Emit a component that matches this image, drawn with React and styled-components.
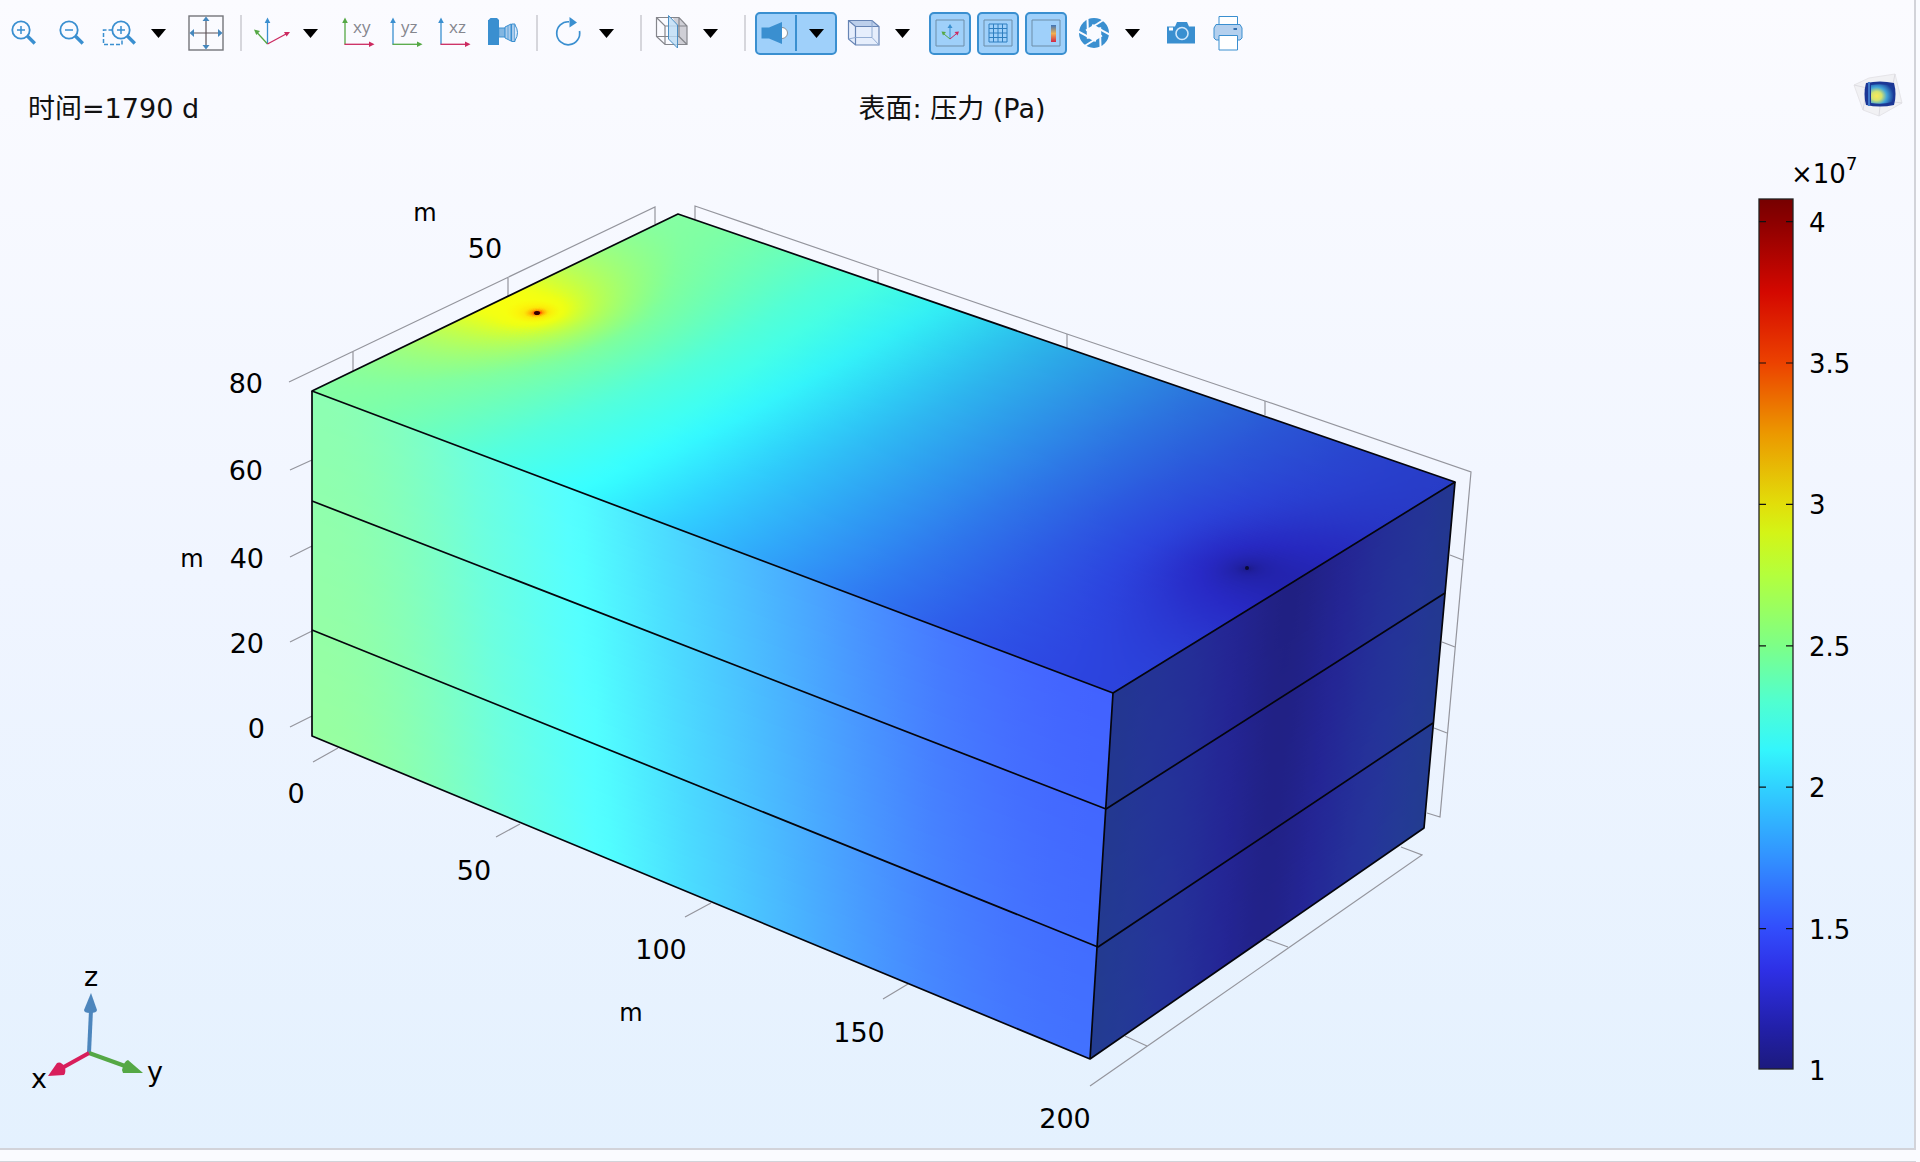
import React from 'react';
import styled, { createGlobalStyle } from 'styled-components';

const BLUE = '#3a8fd0';
const GREEN = '#55a845';
const RED = '#cc2a60';
const GREY = '#85868e';

const GlobalStyle = createGlobalStyle`
  body {
    margin: 0;
    background: #fafbff;
    font-family: 'DejaVu Sans', 'Noto Sans CJK SC', sans-serif;
    color: #111;
  }
`;

const Frame = styled.div`
  display: flex;
  flex-direction: column;
  box-sizing: border-box;
  min-height: 100vh;
  padding-right: 4px;
`;

const Panel = styled.main`
  position: relative;
  display: flex;
  flex: 1;
  flex-direction: column;
  border-right: 2px solid #d2d3d9;
  border-bottom: 2px solid #d2d3d9;
  background: linear-gradient(#fbfbff, #f0f5ff 50%, #e4f1fe);
`;

const StatusStrip = styled.footer`
  height: 11px;
  border-bottom: 1px solid #d2d3d9;
`;

const Toolbar = styled.div`
  display: flex;
  align-items: center;
  height: 66px;
`;

const ToolButton = styled.button`
  display: flex;
  align-items: center;
  justify-content: center;
  width: 42px;
  height: 43px;
  margin: 0 3px;
  padding: 0;
  border: ${props => (props.$active ? `2px solid ${BLUE}` : '0')};
  border-radius: 5px;
  background: ${props => (props.$active ? '#9fd0fa' : 'transparent')};
`;

const CaretButton = styled.button`
  display: flex;
  align-items: center;
  justify-content: center;
  width: 28px;
  height: 43px;
  margin-right: 10px;
  padding: 0;
  border: 0;
  background: transparent;
`;

const SplitButton = styled.div`
  display: flex;
  align-items: center;
  box-sizing: border-box;
  width: 82px;
  height: 43px;
  margin: 0 3px;
  border: 2px solid ${BLUE};
  border-radius: 5px;
  background: #9fd0fa;
`;

const SplitPart = styled.button`
  display: flex;
  flex: 1;
  align-items: center;
  justify-content: center;
  height: 36px;
  padding: 0;
  border: 0;
  background: transparent;

  & + & {
    border-left: 2px solid ${BLUE};
  }
`;

const Divider = styled.span`
  width: 2px;
  height: 36px;
  margin: 0 6px 0 10px;
  background: #d6d6dc;
`;

const IconSvg = styled.svg`
  flex: none;
  width: 36px;
  height: 36px;
  overflow: visible;
  fill: none;
`;

const CaretSvg = styled.svg`
  width: 15px;
  height: 9px;
`;

const PlotHeader = styled.header`
  display: grid;
  grid-template-columns: 1fr auto 1fr;
  align-items: center;
  box-sizing: border-box;
  height: 74px;
  padding: 24px 38px 12px 28px;
  font-size: 27px;
  line-height: 32px;
`;

const HeaderText = styled.span`
  white-space: nowrap;
`;

const Logo = styled.svg`
  position: absolute;
  top: 72px;
  right: 10px;
  width: 52px;
  height: 46px;
`;

const PlotBody = styled.div`
  display: flex;
  flex: 1;
  align-items: flex-start;
`;

const Scene = styled.svg`
  flex: 1690;
  min-width: 0;
  font-size: 27px;
`;

const Legend = styled.svg`
  flex: 224;
  min-width: 0;
  font-size: 26px;
`;

/* ---------- colour table and pressure field ---------- */

const RAINBOW = [
  [1.0, 28, 26, 125],
  [1.15, 34, 32, 170],
  [1.35, 46, 48, 230],
  [1.5, 50, 78, 252],
  [1.75, 50, 146, 255],
  [2.0, 48, 210, 255],
  [2.13, 52, 246, 252],
  [2.3, 80, 255, 208],
  [2.5, 125, 255, 135],
  [2.75, 180, 255, 60],
  [2.9, 212, 244, 22],
  [3.0, 226, 222, 10],
  [3.25, 236, 152, 0],
  [3.5, 236, 66, 0],
  [3.75, 212, 8, 0],
  [4.0, 140, 0, 0],
  [4.08, 118, 0, 0],
];

const lookup = (table, x) => {
  if (x <= table[0][0]) return table[0].slice(1);
  for (let i = 1; i < table.length; i++) {
    if (x <= table[i][0]) {
      const a = table[i - 1];
      const b = table[i];
      const t = (x - a[0]) / (b[0] - a[0]);
      return a.slice(1).map((c, k) => c + (b[k + 1] - c) * t);
    }
  }
  return table[table.length - 1].slice(1);
};

// gain darkens or brightens, lift mixes in white
const shadeColor = (p, gain = 1, lift = 0) =>
  `rgb(${lookup(RAINBOW, p)
    .map(c => Math.max(0, Math.min(255, Math.round(c * gain + (255 - c) * lift))))
    .join(',')})`;

// a well in a closed strip, 200 m x 100 m
const wellTerm = (x, y, x0) => {
  const k = Math.PI / 100;
  const one = xi =>
    Math.log(Math.cosh(k * (x - xi)) - Math.cos(k * (y - 50)) + 1e-5) +
    Math.log(Math.cosh(k * (x - xi)) - Math.cos(k * (y + 50)) + 1e-5);
  return one(x0) + one(-x0) + one(400 - x0);
};

const potential = (u, v) =>
  wellTerm(u * 200, v * 100, 190) - wellTerm(u * 200, v * 100, 10);

const CORNER = potential(0, 0);

const PRESSURE = [
  [-2.8, 1.0],
  [-1.9, 1.16],
  [-1.5, 1.28],
  [-1.2, 1.39],
  [-1, 1.49],
  [-0.75, 1.58],
  [-0.5, 1.69],
  [0, 1.94],
  [0.5, 2.2],
  [1, 2.47],
  [1.25, 2.72],
  [1.45, 2.94],
  [1.65, 3.04],
  [1.82, 3.3],
  [2.0, 3.7],
  [2.2, 4.08],
];

const pressure = (u, v) => lookup(PRESSURE, potential(u, v) / CORNER)[0];

/* ---------- projection ---------- */

// maps the unit square onto a quad given as (0,0) (1,0) (1,1) (0,1)
const project = ([[x0, y0], [x1, y1], [x2, y2], [x3, y3]]) => {
  const dx1 = x1 - x2;
  const dx2 = x3 - x2;
  const dx3 = x0 - x1 + x2 - x3;
  const dy1 = y1 - y2;
  const dy2 = y3 - y2;
  const dy3 = y0 - y1 + y2 - y3;
  const det = dx1 * dy2 - dx2 * dy1;
  const g = (dx3 * dy2 - dx2 * dy3) / det;
  const h = (dx1 * dy3 - dx3 * dy1) / det;
  return (s, t) => {
    const w = g * s + h * t + 1;
    return [
      ((x1 - x0 + g * x1) * s + (x3 - x0 + h * x3) * t + x0) / w,
      ((y1 - y0 + g * y1) * s + (y3 - y0 + h * y3) * t + y0) / w,
    ];
  };
};

const range = (from, to, n) =>
  Array.from({ length: n + 1 }, (_, i) => from + ((to - from) * i) / n);

const grid = list => [...new Set(list.map(n => Number(n.toFixed(5))))].sort((a, b) => a - b);

const WELL_GRID = grid([
  ...range(0, 1, 60),
  ...range(0.02, 0.08, 40),
  ...range(0.92, 0.98, 40),
]);
const TOP_ROWS = grid([...range(0, 1, 140), ...range(0.45, 0.55, 40)]);

const FACES = [
  {
    id: 'top',
    quad: [[312, 391], [1113, 693], [1455, 482], [678, 214]],
    rows: TOP_ROWS,
    stops: WELL_GRID,
    value: (s, t) => pressure(s, t),
    gain: (s, t) => 1.12 - 0.24 * s - 0.09 * t * Math.min(1, s * 2),
    lift: () => 0,
  },
  {
    id: 'front',
    quad: [[312, 391], [1113, 693], [1090, 1059], [312, 736]],
    rows: range(0, 1, 60),
    stops: range(0, 1, 50),
    value: (s, t) => pressure(s, 0) - 0.03 + 0.06 * s + 0.06 * t,
    gain: () => 1.03,
    lift: s => 0.18 - 0.11 * s,
  },
  {
    id: 'side',
    quad: [[1113, 693], [1455, 482], [1424, 828], [1090, 1059]],
    rows: range(0, 1, 60),
    stops: range(0, 1, 50),
    value: (s, t) => pressure(1, s) + 0.04 + 0.04 * t - 0.08 * Math.sin(Math.PI * s),
    gain: s => 0.57 + 0.08 * Math.sin(Math.PI * s),
    lift: () => 0.03,
  },
];

const Face = ({ id, quad, rows, stops, value, gain, lift }) => {
  const at = project(quad);
  return rows.slice(1).map((t1, i) => {
    const t0 = rows[i];
    const t = (t0 + t1) / 2;
    const a = at(0, t);
    const b = at(1, t);
    const length = b[0] - a[0];
    const points = [at(0, t0), at(1, t0), at(1, t1), at(0, t1)];
    return (
      <g key={t0}>
        <linearGradient
          id={`${id}-${i}`}
          gradientUnits="userSpaceOnUse"
          x1={a[0]}
          y1={a[1]}
          x2={b[0]}
          y2={b[1]}
        >
          {stops.map(s => (
            <stop
              key={s}
              offset={(at(s, t)[0] - a[0]) / length}
              stopColor={shadeColor(value(s, t), gain(s, t), lift(s))}
            />
          ))}
        </linearGradient>
        <polygon
          points={points.map(p => p.join(',')).join(' ')}
          fill={`url(#${id}-${i})`}
          shapeRendering="crispEdges"
        />
      </g>
    );
  });
};

/* ---------- scene ---------- */

const AXIS_LINES = [
  'M289 382L655 207V224M353 351V371M508 278V297',
  'M695 219V206L878 269L1067 334L1265 401L1471 472L1440 817L1427 813',
  'M878 269V283M1067 334V348M1265 401V415',
  'M1450 555L1463 560M1442 642L1455 647M1434 728L1447 733',
  'M1401 847L1422 855L1090 1086M1266 939L1288 947M1125 1036L1147 1046',
  'M290 470L312 460M290 557L312 546M290 642L312 631M290 727L312 716',
  'M313 762L338 748M496 837L520 824M685 917L711 903M883 999L908 984',
];

const EDGES = [
  'M312 391L678 214L1455 482L1113 693Z',
  'M312 391V736L1090 1059L1424 828L1455 482M1113 693L1090 1059',
  'M312 501L1106 809L1445 593',
  'M312 630L1098 947L1433 723',
];

const TICK_LABELS = [
  ['80', 263, 393, 'end'],
  ['60', 263, 480, 'end'],
  ['40', 264, 568, 'end'],
  ['20', 264, 653, 'end'],
  ['0', 265, 738, 'end'],
  ['0', 296, 803, 'middle'],
  ['50', 474, 880, 'middle'],
  ['100', 661, 959, 'middle'],
  ['150', 859, 1042, 'middle'],
  ['200', 1065, 1128, 'middle'],
  ['50', 485, 258, 'middle'],
];

const UNIT_LABELS = [
  [425, 221],
  [192, 567],
  [631, 1021],
];

const ModelScene = () => (
  <Scene viewBox="0 140 1690 1008" role="img" aria-label="表面: 压力 (Pa)">
    <g fill="none" stroke="#94959d" strokeWidth="1.2">
      {AXIS_LINES.map(d => (
        <path key={d} d={d} />
      ))}
    </g>
    {FACES.map(face => (
      <Face key={face.id} {...face} />
    ))}
    <ellipse cx="537" cy="313" rx="3" ry="2" fill="#300" />
    <circle cx="1247" cy="568" r="2" fill="#0a0a30" />
    <g fill="none" stroke="#05050c" strokeWidth="1.7" strokeLinejoin="round">
      {EDGES.map(d => (
        <path key={d} d={d} />
      ))}
    </g>
    {TICK_LABELS.map(([text, x, y, anchor]) => (
      <text key={`${x}-${y}`} x={x} y={y} textAnchor={anchor}>
        {text}
      </text>
    ))}
    {UNIT_LABELS.map(([x, y]) => (
      <text key={x} x={x} y={y} textAnchor="middle" fontSize="24">
        m
      </text>
    ))}
    <g strokeWidth="4">
      <path d="M89 1053L91 1010" stroke="#4d86bd" />
      <path d="M91 993L97 1010Q97 1013 90 1013Q84 1013 84 1010Z" fill="#4d86bd" />
      <path d="M89 1053L125 1066" stroke={GREEN} />
      <path d="M143 1073L128 1060Q124 1061 122 1070L123 1073Z" fill={GREEN} />
      <path d="M89 1053L62 1068" stroke="#d81e5b" />
      <path d="M48 1076L57 1063Q61 1061 65 1067Q66 1073 64 1075Z" fill="#d81e5b" />
    </g>
    <text x="91" y="986" textAnchor="middle">z</text>
    <text x="39" y="1088" textAnchor="middle">x</text>
    <text x="155" y="1081" textAnchor="middle">y</text>
  </Scene>
);

const BAR_TOP = 199;
const BAR_BOTTOM = 1069;
const barY = p => 1070 - ((p - 1) / 0.5) * 141.4;

const ColorLegend = () => (
  <Legend viewBox="1690 140 224 1008" role="img" aria-label="×10⁷ Pa">
    <linearGradient id="bar" x1="0" y1="1" x2="0" y2="0">
      {RAINBOW.map(([p]) => (
        <stop key={p} offset={(p - 1) / 3.08} stopColor={shadeColor(p)} />
      ))}
    </linearGradient>
    <rect
      x="1759"
      y={BAR_TOP}
      width="34"
      height={BAR_BOTTOM - BAR_TOP}
      fill="url(#bar)"
      stroke="#222"
      strokeWidth="1.3"
    />
    {[4, 3.5, 3, 2.5, 2, 1.5].map(p => (
      <path
        key={p}
        d={`M1759 ${barY(p)}h7M1786 ${barY(p)}h7`}
        stroke="#111"
        strokeWidth="1.2"
      />
    ))}
    {[4, 3.5, 3, 2.5, 2, 1.5, 1].map(p => (
      <text key={p} x="1809" y={Math.round(barY(p)) + 10}>
        {p}
      </text>
    ))}
    <text x="1791" y="183">
      ×10
      <tspan dy="-13" fontSize="18">
        7
      </tspan>
    </text>
  </Legend>
);

/* ---------- toolbar icons ---------- */

const Icon = ({ children }) => (
  <IconSvg viewBox="0 0 36 36" aria-hidden="true">
    {children}
  </IconSvg>
);

const Caret = () => (
  <CaretSvg viewBox="0 0 15 9" aria-hidden="true">
    <path d="M0 0H15L7.500 9Z" fill="#000" />
  </CaretSvg>
);

const Magnifier = ({ x = 0, plus }) => (
  <g stroke={BLUE} transform={`translate(${x} 0)`}>
    <circle cx="15" cy="15" r="8.700" strokeWidth="1.800" />
    <path d="M21.300 21L28.800 28.500" strokeWidth="3.400" />
    <path d={plus ? 'M11 15h8M15 11v8' : 'M11 15h8'} strokeWidth="1.500" />
  </g>
);

const ExtentsIcon = () => (
  <Icon>
    <rect x="1" y="1" width="34" height="34" stroke="#74757b" strokeWidth="1.400" />
    <path d="M18 4V32M4 18H32" stroke="#5d5258" strokeWidth="1.200" />
    <path
      d="M18 1.500L21.500 6H14.500ZM18 34.500L21.500 30H14.500ZM1.500 18L6 14V22ZM34.500 18L30 14V22Z"
      fill="#4587bd"
    />
  </Icon>
);

const AxesIcon = () => (
  <Icon>
    <path d="M13.500 29V6" stroke={BLUE} strokeWidth="1.300" />
    <path d="M13.500 2.500L16.300 8H10.700Z" fill={BLUE} />
    <path d="M13.500 29L3 17.500" stroke={GREEN} strokeWidth="1.300" />
    <path d="M0 14.500L6 16L2.300 20Z" fill={GREEN} />
    <path d="M13.500 29L32 19" stroke={RED} strokeWidth="1.300" />
    <path d="M36 17L32.600 21.500L30 17Z" fill={RED} />
  </Icon>
);

const PlaneLabel = styled.text`
  font-family: 'Open Sans', sans-serif;
  font-size: 17px;
  fill: ${GREY};
`;

const PlaneIcon = ({ label, up, right }) => (
  <Icon>
    <path d="M5 29.500V6" stroke={up} strokeWidth="1.300" />
    <path d="M5 2.500L7.800 8H2.200Z" fill={up} />
    <path d="M4.500 29.300H30" stroke={right} strokeWidth="1.300" />
    <path d="M34.500 29.300L29 32V26.600Z" fill={right} />
    <PlaneLabel x="13" y="18">
      {label}
    </PlaneLabel>
  </Icon>
);

const LensIcon = () => (
  <Icon>
    <path d="M4.500 5L6.500 3H13L15 5V30H4V5Z" fill={BLUE} />
    <path d="M15 13H21V22H15Z" fill="#a9cbec" stroke={BLUE} />
    <path d="M21 12L27 9V26L21 23Z" fill="#a9cbec" stroke={BLUE} />
    <path d="M27.500 9H31V26.500H27.500Z" fill="#a9cbec" stroke={BLUE} />
    <path d="M31 10Q36 17.500 31 25.500" stroke={BLUE} fill="#dceafa" />
    <path d="M17 13V22M19 13V22M24 11V24" stroke={BLUE} strokeWidth="0.700" />
  </Icon>
);

const RotateIcon = () => (
  <Icon>
    <path d="M29.500 16A11.500 11.500 0 1 1 19 6.800" stroke={BLUE} strokeWidth="1.700" />
    <path d="M19.500 2L27 7.500L19.500 12.500Z" fill={BLUE} />
  </Icon>
);

const ClipIcon = () => (
  <Icon>
    <path d="M19 3H25L33 11V29.500H23V12Z" fill="#cfcfd6" />
    <path
      d="M2.500 2.500H25L33 11V29.500H11L2.500 21.500ZM2.500 2.500L11 11H33M11 11V29.500M2.500 21.500H25V2.500M25 21.500L33 29.500"
      stroke="#85868c"
      strokeWidth="1.200"
    />
    <path d="M14.500 0.500L23.500 10V33L14.500 24Z" fill="#bddcf4" fillOpacity="0.800" stroke="#4b8fc4" />
  </Icon>
);

const HeadlightIcon = () => (
  <Icon>
    <circle cx="24" cy="18" r="5.500" fill="#fff" stroke="#8c9298" />
    <path d="M3.500 12.500H11L24 7V29L11 23.500H3.500Z" fill={BLUE} />
  </Icon>
);

const BoxIcon = () => (
  <Icon>
    <path d="M2.500 5.500H26L33 11.500V30H9.500L2.500 24Z" fill="#e6eefc" />
    <path d="M2.500 5.500H26L33 11.500H9.500Z" fill="#bccfeb" />
    <path
      d="M2.500 5.500H26L33 11.500V30H9.500L2.500 24ZM2.500 5.500L9.500 11.500H33M9.500 11.500V30"
      stroke="#6684b4"
      strokeWidth="1.200"
    />
    <path d="M26 5.500V22.500L33 30M9.500 22.500H26M2.500 24L9.500 22.500" stroke="#8ba6cf" strokeWidth="0.900" />
  </Icon>
);

const FRAME_PATH = 'M4 5H32V31H4Z';

const ShowAxesIcon = () => (
  <Icon>
    <path d={FRAME_PATH} stroke="#6d8da8" />
    <path d="M18 24V12" stroke={BLUE} />
    <path d="M18 9L20.500 13H15.500Z" fill={BLUE} />
    <path d="M18 24L12 19" stroke={GREEN} />
    <path d="M9.500 16.500L14 17L11 20.500Z" fill={GREEN} />
    <path d="M18 24L24 19" stroke={RED} />
    <path d="M27 16.500L25.500 20.500L22.500 17Z" fill={RED} />
  </Icon>
);

const ShowGridIcon = () => (
  <Icon>
    <path d={FRAME_PATH} stroke="#6d8da8" />
    <path
      d="M9 9H27V27H9ZM13.500 9V27M18 9V27M22.500 9V27M9 13.500H27M9 18H27M9 22.500H27"
      stroke="#2f7fc0"
    />
  </Icon>
);

const ShowLegendIcon = () => (
  <Icon>
    <linearGradient id="mini" x1="0" y1="0" x2="0" y2="1">
      <stop offset="0" stopColor="#3d74b8" />
      <stop offset="0.5" stopColor="#f0b050" />
      <stop offset="1" stopColor="#d02848" />
    </linearGradient>
    <path d={FRAME_PATH} stroke="#6d8da8" />
    <rect x="23" y="10" width="5" height="17" fill="url(#mini)" />
  </Icon>
);

const ShutterIcon = () => (
  <Icon>
    <circle cx="18" cy="18" r="15" fill={BLUE} />
    <path d="M18 11L24 14.500V21.500L18 25L12 21.500V14.500Z" fill="#fafbff" />
    {[0, 60, 120, 180, 240, 300].map(angle => (
      <path
        key={angle}
        d="M10 15.500L21 9L29 4"
        stroke="#fafbff"
        strokeWidth="2"
        transform={`rotate(${angle} 18 18)`}
      />
    ))}
  </Icon>
);

const CameraIcon = () => (
  <Icon>
    <path d="M5 11.500H13L15 7H25L27 11.500H33V28.500H5Z" fill={BLUE} />
    <circle cx="20" cy="18.500" r="6" stroke="#cfe6fa" strokeWidth="1.600" />
    <rect x="7" y="12.500" width="4" height="3" fill="#fff" />
  </Icon>
);

const PrinterIcon = () => (
  <Icon>
    <path d="M9 1.500H27.500V12H9Z" fill="#fff" stroke={BLUE} />
    <path
      d="M6 9.500H30L32 13V23L30 25H6L4 23V13Z"
      fill="#b4d0ee"
      stroke={BLUE}
    />
    <path d="M9 20.500H27.500V35H9Z" fill="#fff" stroke={BLUE} />
    <path d="M23.500 14H27" stroke="#336fae" strokeWidth="2" />
  </Icon>
);

const Tool = ({ label, active, children }) => (
  <ToolButton type="button" aria-label={label} aria-pressed={active} $active={active}>
    {children}
  </ToolButton>
);

const Menu = ({ label }) => (
  <CaretButton type="button" aria-label={label} aria-haspopup="menu">
    <Caret />
  </CaretButton>
);

const GraphicsToolbar = () => (
  <Toolbar role="toolbar">
    <Tool label="放大">
      <Icon>
        <Magnifier plus />
      </Icon>
    </Tool>
    <Tool label="缩小">
      <Icon>
        <Magnifier />
      </Icon>
    </Tool>
    <Tool label="框选缩放">
      <Icon>
        <path
          d="M10.500 15H1.500V29.500H20V25"
          stroke={BLUE}
          strokeWidth="1.500"
          strokeDasharray="4 2"
        />
        <Magnifier x={4} plus />
      </Icon>
    </Tool>
    <Menu label="缩放选项" />
    <Tool label="缩放到窗口大小">
      <ExtentsIcon />
    </Tool>
    <Divider />
    <Tool label="默认视图">
      <AxesIcon />
    </Tool>
    <Menu label="视图选项" />
    <Tool label="xy 视图">
      <PlaneIcon label="xy" up={GREEN} right={RED} />
    </Tool>
    <Tool label="yz 视图">
      <PlaneIcon label="yz" up={BLUE} right={GREEN} />
    </Tool>
    <Tool label="xz 视图">
      <PlaneIcon label="xz" up={BLUE} right={RED} />
    </Tool>
    <Tool label="正交投影">
      <LensIcon />
    </Tool>
    <Divider />
    <Tool label="旋转">
      <RotateIcon />
    </Tool>
    <Menu label="旋转选项" />
    <Divider />
    <Tool label="裁剪">
      <ClipIcon />
    </Tool>
    <Menu label="裁剪选项" />
    <Divider />
    <SplitButton>
      <SplitPart type="button" aria-label="场景光" aria-pressed="true">
        <HeadlightIcon />
      </SplitPart>
      <SplitPart type="button" aria-label="光源选项" aria-haspopup="menu">
        <Caret />
      </SplitPart>
    </SplitButton>
    <Tool label="透明度">
      <BoxIcon />
    </Tool>
    <Menu label="渲染选项" />
    <Tool label="显示坐标轴" active>
      <ShowAxesIcon />
    </Tool>
    <Tool label="显示栅格" active>
      <ShowGridIcon />
    </Tool>
    <Tool label="显示图例" active>
      <ShowLegendIcon />
    </Tool>
    <Tool label="环境">
      <ShutterIcon />
    </Tool>
    <Menu label="环境选项" />
    <Tool label="图像快照">
      <CameraIcon />
    </Tool>
    <Tool label="打印">
      <PrinterIcon />
    </Tool>
  </Toolbar>
);

const ProductLogo = () => (
  <Logo viewBox="0 0 52 46" aria-hidden="true">
    <defs>
      <radialGradient id="glow" cx="0.25" cy="0.6" r="0.75">
        <stop offset="0" stopColor="#fbe95a" />
        <stop offset="0.3" stopColor="#d4e370" />
        <stop offset="0.6" stopColor="#43a5d8" />
        <stop offset="1" stopColor="#1b3f9c" />
      </radialGradient>
    </defs>
    <path d="M2 13L17 6L43 2L50 31L27 44L11 38Z" fill="#f1f1f4" stroke="#e6e5e9" />
    <path d="M2 13L15 16L11 38M43 2L41 12M27 44L28 34M50 31L42 30" fill="none" stroke="#dddce2" />
    <path d="M14 11Q28 8 42 11Q45 22 42 33Q28 36 14 33Q11 22 14 11Z" fill="#1c3795" />
    <path d="M19 13Q30 11 40 14Q43 22 40 30Q30 33 19 31Z" fill="url(#glow)" />
    <path d="M17 10V34" stroke="#3f78c8" strokeWidth="2" />
  </Logo>
);

const App = () => (
  <>
    <GlobalStyle />
    <Frame>
      <Panel>
        <GraphicsToolbar />
        <PlotHeader>
          <HeaderText>时间=1790 d</HeaderText>
          <HeaderText>表面: 压力 (Pa)</HeaderText>
        </PlotHeader>
        <ProductLogo />
        <PlotBody>
          <ModelScene />
          <ColorLegend />
        </PlotBody>
      </Panel>
      <StatusStrip />
    </Frame>
  </>
);

export default App;
